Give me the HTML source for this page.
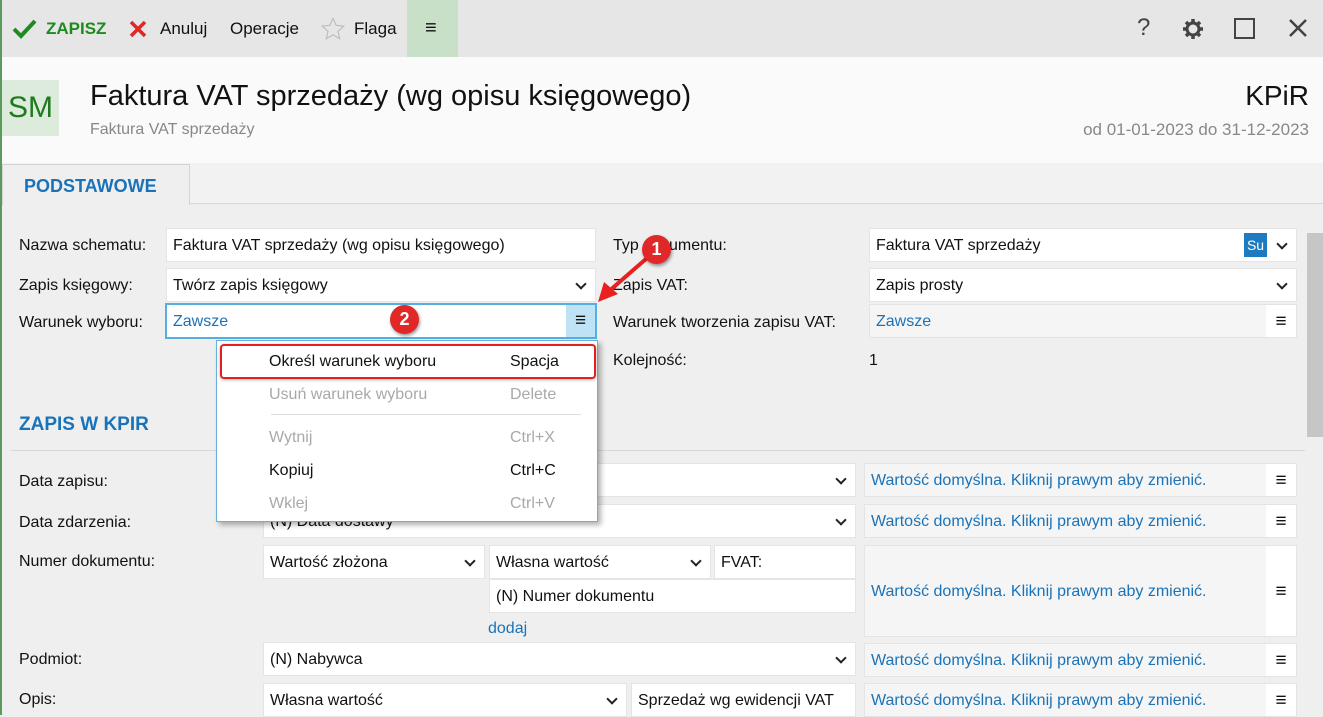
<!DOCTYPE html>
<html><head><meta charset="utf-8">
<style>
*{box-sizing:border-box;margin:0;padding:0}
body{width:1323px;height:715px;overflow:hidden;position:relative;background:#efefef;font-family:"Liberation Sans",sans-serif;font-size:16px;color:#111}
.a{position:absolute;white-space:nowrap}
.f{position:absolute;background:#fff;border:1px solid #e4e4e4;font-size:16px;padding:0 6px;line-height:33px;white-space:nowrap;overflow:hidden}
.dd::after{content:"";position:absolute;right:10px;top:11px;width:6px;height:6px;border-right:2px solid #222;border-bottom:2px solid #222;transform:rotate(45deg)}
.lbl{position:absolute;font-size:16px;white-space:nowrap}
.blue{color:#1a73b8}
.rf{position:absolute;background:#f5f5f5;border:1px solid #e4e4e4;color:#1a73b8;padding:0 6px;line-height:33px;font-size:16px;white-space:nowrap}
.rf .b{position:absolute;right:0;top:0;bottom:0;width:30px;background:#fff;color:#111;text-align:center;font-size:19px}
.mi{position:absolute;left:52px;font-size:16px}
.ms{position:absolute;left:293px;font-size:16px}
.g{color:#a9a9a9}
</style></head><body>
<div class="a" style="left:0;top:0;width:1323px;height:57px;background:#e6e6e6"></div>
<div class="a" style="left:0;top:0;width:2px;height:715px;background:#5a9a5a"></div>
<div class="a" style="left:407px;top:0;width:51px;height:57px;background:#c8e0c8"></div>
<svg class="a" style="left:12px;top:18px" width="26" height="22" viewBox="0 0 26 22"><path d="M2 11 L9 18 L23 3" stroke="#1f8a1f" stroke-width="4" fill="none"/></svg>
<div class="a" style="left:46px;top:19px;font-size:17px;color:#1f8a1f;font-weight:bold">ZAPISZ</div>
<svg class="a" style="left:128px;top:19px" width="20" height="20"><path d="M3 3 L17 17 M17 3 L3 17" stroke="#e02828" stroke-width="3.5"/></svg>
<div class="a" style="left:160px;top:19px;font-size:17px">Anuluj</div>
<div class="a" style="left:230px;top:19px;font-size:17px">Operacje</div>
<svg class="a" style="left:320px;top:16px" width="26" height="26" viewBox="0 0 24 24"><path d="M12 2 L14.9 8.6 L22 9.3 L16.6 14 L18.2 21 L12 17.3 L5.8 21 L7.4 14 L2 9.3 L9.1 8.6Z" fill="none" stroke="#bbb" stroke-width="1"/></svg>
<div class="a" style="left:354px;top:19px;font-size:17px">Flaga</div>
<div class="a" style="left:425px;top:17px;font-size:20px">≡</div>
<div class="a" style="left:1137px;top:14px;font-size:24px;color:#444">?</div>
<svg class="a" style="left:1181px;top:17px" width="24" height="24" viewBox="0 0 24 24"><circle cx="12" cy="12" r="6" fill="none" stroke="#444" stroke-width="3"/><g stroke="#444" stroke-width="3.5"><path d="M12 2v4M12 18v4M2 12h4M18 12h4M5 5l3 3M16 16l3 3M5 19l3-3M16 8l3-3"/></g></svg>
<div class="a" style="left:1234px;top:18px;width:21px;height:21px;border:2.5px solid #444"></div>
<svg class="a" style="left:1288px;top:18px" width="20" height="20"><path d="M2 2 L18 18 M18 2 L2 18" stroke="#444" stroke-width="2.5"/></svg>

<div class="a" style="left:2px;top:57px;width:1321px;height:106px;background:#fafafa"></div>
<div class="a" style="left:2px;top:80px;width:57px;height:56px;background:#dcebdc;color:#1f7a1f;font-size:30px;line-height:56px;text-align:center">SM</div>
<div class="a" style="left:90px;top:80px;font-size:29px">Faktura VAT sprzedaży (wg opisu księgowego)</div>
<div class="a" style="left:90px;top:121px;font-size:16px;color:#888">Faktura VAT sprzedaży</div>
<div class="a" style="right:14px;top:80px;font-size:28px">KPiR</div>
<div class="a" style="right:14px;top:120px;font-size:17px;color:#888">od 01-01-2023 do 31-12-2023</div>

<div class="a" style="left:2px;top:163px;width:1321px;height:41px;background:#f2f2f2;border-bottom:1px solid #d8d8d8"></div>
<div class="a" style="left:2px;top:164px;width:188px;height:41px;background:#efefef;border:1px solid #d4d4d4;border-bottom:none;color:#1a73b8;font-weight:bold;font-size:18px;line-height:42px;padding-left:21px">PODSTAWOWE</div>

<div class="a" style="left:1305px;top:205px;width:18px;height:510px;background:#efefef"></div>
<div class="a" style="left:1307px;top:233px;width:16px;height:204px;background:#c6c6c6"></div>

<div class="lbl" style="left:19px;top:237px">Nazwa schematu:</div>
<div class="f" style="left:166px;top:228px;width:430px;height:34px">Faktura VAT sprzedaży (wg opisu księgowego)</div>
<div class="lbl" style="left:19px;top:277px">Zapis księgowy:</div>
<div class="f dd" style="left:166px;top:268px;width:430px;height:34px">Twórz zapis księgowy</div>
<div class="lbl" style="left:19px;top:314px">Warunek wyboru:</div>
<div class="f" style="left:165px;top:303px;width:432px;height:36px;border:2px solid #55aee0;color:#1a73b8;line-height:33px">Zawsze<div class="a" style="right:0;top:0;width:29px;height:32px;background:#bfe3f5;color:#111;text-align:center;font-size:19px;line-height:32px">≡</div></div>

<div class="lbl" style="left:613px;top:237px">Typ dokumentu:</div>
<div class="f dd" style="left:869px;top:228px;width:428px;height:34px">Faktura VAT sprzedaży<div class="a" style="left:374px;top:4px;width:23px;height:24px;background:#1e7bc0;color:#fff;font-size:14px;line-height:24px;text-align:center">Su</div></div>
<div class="lbl" style="left:613px;top:277px">Zapis VAT:</div>
<div class="f dd" style="left:869px;top:268px;width:428px;height:34px">Zapis prosty</div>
<div class="lbl" style="left:613px;top:314px">Warunek tworzenia zapisu VAT:</div>
<div class="rf" style="left:869px;top:304px;width:428px;height:34px">Zawsze<div class="b">≡</div></div>
<div class="lbl" style="left:613px;top:352px">Kolejność:</div>
<div class="lbl" style="left:869px;top:352px">1</div>

<div class="a" style="left:19px;top:414px;font-size:19px;font-weight:bold;color:#1a73b8">ZAPIS W KPIR</div>
<div class="a" style="left:11px;top:450px;width:1294px;height:1px;background:#d8d8d8"></div>

<div class="lbl" style="left:19px;top:473px">Data zapisu:</div>
<div class="f dd" style="left:263px;top:463px;width:593px;height:34px"></div>
<div class="rf" style="left:864px;top:463px;width:433px;height:34px">Wartość domyślna. Kliknij prawym aby zmienić.<div class="b">≡</div></div>
<div class="lbl" style="left:19px;top:514px">Data zdarzenia:</div>
<div class="f dd" style="left:263px;top:504px;width:593px;height:34px">(N) Data dostawy</div>
<div class="rf" style="left:864px;top:504px;width:433px;height:34px">Wartość domyślna. Kliknij prawym aby zmienić.<div class="b">≡</div></div>
<div class="lbl" style="left:19px;top:553px">Numer dokumentu:</div>
<div class="f dd" style="left:263px;top:545px;width:222px;height:34px">Wartość złożona</div>
<div class="f dd" style="left:489px;top:545px;width:222px;height:34px">Własna wartość</div>
<div class="f" style="left:714px;top:545px;width:142px;height:34px">FVAT:</div>
<div class="f" style="left:489px;top:579px;width:367px;height:34px">(N) Numer dokumentu</div>
<div class="lbl blue" style="left:488px;top:620px">dodaj</div>
<div class="rf" style="left:864px;top:545px;width:433px;height:92px;line-height:92px">Wartość domyślna. Kliknij prawym aby zmienić.<div class="b">≡</div></div>
<div class="lbl" style="left:19px;top:651px">Podmiot:</div>
<div class="f dd" style="left:263px;top:642px;width:593px;height:34px">(N) Nabywca</div>
<div class="rf" style="left:864px;top:643px;width:433px;height:34px">Wartość domyślna. Kliknij prawym aby zmienić.<div class="b">≡</div></div>
<div class="lbl" style="left:19px;top:691px">Opis:</div>
<div class="f dd" style="left:263px;top:683px;width:364px;height:34px">Własna wartość</div>
<div class="f" style="left:631px;top:683px;width:225px;height:34px">Sprzedaż wg ewidencji VAT</div>
<div class="rf" style="left:864px;top:683px;width:433px;height:34px">Wartość domyślna. Kliknij prawym aby zmienić.<div class="b">≡</div></div>

<div class="a" style="left:216px;top:340px;width:382px;height:182px;background:#fff;border:1px solid #6ab0de;box-shadow:3px 3px 5px rgba(0,0,0,0.3)">
<div class="mi" style="top:12px">Określ warunek wyboru</div><div class="ms" style="top:12px">Spacja</div>
<div class="mi g" style="top:45px">Usuń warunek wyboru</div><div class="ms g" style="top:45px">Delete</div>
<div class="a" style="left:54px;top:73px;width:310px;height:1px;background:#ddd"></div>
<div class="mi g" style="top:88px">Wytnij</div><div class="ms g" style="top:88px">Ctrl+X</div>
<div class="mi" style="top:121px">Kopiuj</div><div class="ms" style="top:121px">Ctrl+C</div>
<div class="mi g" style="top:154px">Wklej</div><div class="ms g" style="top:154px">Ctrl+V</div>
</div>
<div class="a" style="left:220px;top:344px;width:376px;height:35px;border:2px solid #e02020;border-radius:4px;box-shadow:0 1px 3px rgba(0,0,0,0.3)"></div>

<svg class="a" style="left:590px;top:236px" width="90" height="80"><path d="M64 16 L18 56" stroke="#e82020" stroke-width="4"/><path d="M8 66 L14 46 L28 58Z" fill="#e82020"/></svg>
<div class="a" style="left:642px;top:235px;width:29px;height:29px;border-radius:50%;background:#e02828;color:#fff;font-size:18px;font-weight:bold;text-align:center;line-height:29px;box-shadow:1px 2px 3px rgba(0,0,0,0.4)">1</div>
<div class="a" style="left:390px;top:305px;width:29px;height:29px;border-radius:50%;background:#e02828;color:#fff;font-size:18px;font-weight:bold;text-align:center;line-height:29px;box-shadow:1px 2px 3px rgba(0,0,0,0.4)">2</div>
</body></html>
